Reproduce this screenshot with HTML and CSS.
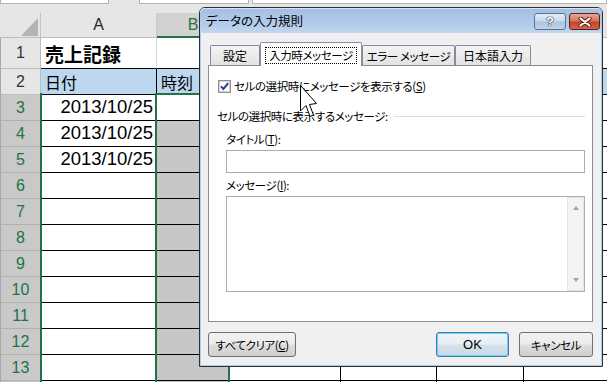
FILE: index.html
```html
<!DOCTYPE html>
<html lang="ja">
<head>
<meta charset="utf-8">
<title>データの入力規則</title>
<link rel="stylesheet" href="styles.css">
</head>
<body>
<div class="screen">
  <div class="topbar">
    <div class="tb-box tb-name"></div>
    <div class="tb-gap"></div>
    <div class="tb-box tb-mid"></div>
    <div class="tb-box tb-formula"></div>
  </div>
  <div class="sheet">
    <div class="corner"><span class="tri"></span></div>
    <div class="colh">A</div>
    <div class="colh sel">B</div>
    <div class="colh"></div>
    <div class="colh"></div>
    <div class="colh"></div>
    <div class="colh"></div>

    <div class="rowh">1</div>
    <div class="c r1 title">売上記録</div>
    <div class="c r1"></div>
    <div class="c r1"></div>
    <div class="c r1"></div>
    <div class="c r1"></div>
    <div class="c r1"></div>

    <div class="rowh">2</div>
    <div class="c hdr">日付</div>
    <div class="c hdr">時刻</div>
    <div class="c hdr"></div>
    <div class="c hdr"></div>
    <div class="c hdr"></div>
    <div class="c hdr"></div>

    <div class="rowh sel">3</div>
    <div class="c date">2013/10/25</div>
    <div class="c"></div>
    <div class="c"></div><div class="c"></div><div class="c"></div><div class="c"></div>

    <div class="rowh sel">4</div>
    <div class="c date">2013/10/25</div>
    <div class="c bsel"></div>
    <div class="c"></div><div class="c"></div><div class="c"></div><div class="c"></div>

    <div class="rowh sel">5</div>
    <div class="c date">2013/10/25</div>
    <div class="c bsel"></div>
    <div class="c"></div><div class="c"></div><div class="c"></div><div class="c"></div>

    <div class="rowh sel">6</div>
    <div class="c"></div><div class="c bsel"></div>
    <div class="c"></div><div class="c"></div><div class="c"></div><div class="c"></div>

    <div class="rowh sel">7</div>
    <div class="c"></div><div class="c bsel"></div>
    <div class="c"></div><div class="c"></div><div class="c"></div><div class="c"></div>

    <div class="rowh sel">8</div>
    <div class="c"></div><div class="c bsel"></div>
    <div class="c"></div><div class="c"></div><div class="c"></div><div class="c"></div>

    <div class="rowh sel">9</div>
    <div class="c"></div><div class="c bsel"></div>
    <div class="c"></div><div class="c"></div><div class="c"></div><div class="c"></div>

    <div class="rowh sel">10</div>
    <div class="c"></div><div class="c bsel"></div>
    <div class="c"></div><div class="c"></div><div class="c"></div><div class="c"></div>

    <div class="rowh sel">11</div>
    <div class="c"></div><div class="c bsel"></div>
    <div class="c"></div><div class="c"></div><div class="c"></div><div class="c"></div>

    <div class="rowh sel">12</div>
    <div class="c"></div><div class="c bsel"></div>
    <div class="c"></div><div class="c"></div><div class="c"></div><div class="c"></div>

    <div class="rowh sel">13</div>
    <div class="c"></div><div class="c bsel"></div>
    <div class="c"></div><div class="c"></div><div class="c"></div><div class="c"></div>

    <div class="rowh sel"></div>
    <div class="c"></div><div class="c bsel"></div>
    <div class="c"></div><div class="c"></div><div class="c"></div><div class="c"></div>
  </div>

  <div class="selline sel-a"></div>
  <div class="selline sel-ab"></div>
  <div class="selline sel-b"></div>
  <div class="seltop"></div>

  <div class="dialog">
    <div class="titlebar">
      <span class="dtitle">データの入力規則</span>
      <div class="tbtns">
        <div class="tbtn help">?</div>
        <div class="tbtn close">
          <svg width="14" height="10" viewBox="0 0 14 10">
            <path d="M2.5 1.5 L11.5 8.5 M11.5 1.5 L2.5 8.5" stroke="#5a1a10" stroke-width="4" stroke-linecap="round"/>
            <path d="M2.5 1.5 L11.5 8.5 M11.5 1.5 L2.5 8.5" stroke="#ffffff" stroke-width="2.2" stroke-linecap="round"/>
          </svg>
        </div>
      </div>
    </div>
    <div class="dbody">
      <div class="tabs">
        <div class="tab t1">設定</div>
        <div class="tab t2 active"><span class="focus">入力時メッセージ</span></div>
        <div class="tab t3">エラー メッセージ</div>
        <div class="tab t4">日本語入力</div>
      </div>
      <div class="panel">
        <div class="chkrow">
          <svg class="chk" width="13" height="13" viewBox="0 0 13 13">
            <rect x="0.5" y="0.5" width="12" height="12" fill="#f4f4f4" stroke="#8e8f8f"/>
            <rect x="1.5" y="1.5" width="10" height="10" fill="#ffffff" stroke="#d2d2d2"/>
            <path d="M3 6.3 L5.4 9 L10.2 3.2" fill="none" stroke="#22418f" stroke-width="2"/>
          </svg>
          <span>セルの選択時にメッセージを表示する(<u>S</u>)</span>
        </div>
        <div class="group"><span>セルの選択時に表示するメッセージ:</span><i class="rule"></i></div>
        <div class="lbl">タイトル(<u>T</u>):</div>
        <div class="input"></div>
        <div class="lbl lbl2">メッセージ(<u>I</u>):</div>
        <div class="textarea">
          <div class="vscroll"><span class="arr up"></span><span class="arr dn"></span></div>
        </div>
      </div>
      <div class="btnrow">
        <button class="btn clear">すべてクリア(<u>C</u>)</button>
        <span class="spacer"></span>
        <button class="btn ok">OK</button>
        <button class="btn cancel">キャンセル</button>
      </div>
    </div>
  </div>

  <svg class="cursor" width="18" height="34" viewBox="0 0 18 34">
    <polygon points="0.5,0.5 0.5,26 6,20.5 10,31.5 13.5,30 9.5,19.5 16.5,18.5" fill="#ffffff" stroke="#000000" stroke-width="1"/>
  </svg>
</div>
</body>
</html>
```

FILE: styles.css
```css
* { box-sizing: border-box; }
html, body { margin: 0; padding: 0; }
body {
  width: 607px;
  height: 382px;
  overflow: hidden;
  background: #e6e6e6;
  font-family: "Liberation Sans", Arial, sans-serif;
}
.screen {
  position: relative;
  width: 607px;
  height: 382px;
  overflow: hidden;
  background: #e6e6e6;
}

/* top strip (name box / formula bar edges) */
.topbar { display: flex; height: 13px; }
.tb-box { height: 4px; background: #fff; border: 1px solid #b4b4b4; border-top: none; }
.tb-name { width: 109px; }
.tb-gap { width: 30px; }
.tb-mid { width: 110px; }
.tb-formula { flex: 1; margin-left: 3px; }

/* sheet grid */
.sheet {
  display: grid;
  grid-template-columns: 41px 116px 73px 111px 96px 87px 100px;
  grid-template-rows: 25px 31px repeat(13, 26px);
  width: 624px;
}
.corner {
  background: #e6e6e6;
  border-right: 1px solid #c4c4c4;
  border-bottom: 1px solid #bdbdbd;
  display: flex;
  justify-content: flex-end;
  align-items: flex-end;
  padding: 0 2px 1px 0;
}
.tri {
  width: 17px;
  height: 18px;
  background: #b4b4b4;
  clip-path: polygon(100% 0, 100% 100%, 0 100%);
}
.colh {
  display: flex;
  align-items: center;
  justify-content: center;
  background: #e6e6e6;
  border-right: 1px solid #c8c8c8;
  border-bottom: 1px solid #bdbdbd;
  font-size: 16px;
  color: #262626;
}
.colh.sel {
  background: #d2d2d2;
  color: #217346;
  border-bottom: 2px solid #217346;
}
.rowh {
  display: flex;
  align-items: center;
  justify-content: center;
  background: #e6e6e6;
  border-left: 1px solid #a8a8a8;
  border-right: 1px solid #bdbdbd;
  border-bottom: 1px solid #bdbdbd;
  font-size: 16px;
  color: #333;
}
.rowh.sel { background: #c9c9c9; color: #217346; border-bottom-color: #b0b0b0; }

.c {
  background: #fff;
  border-right: 1px solid #000;
  border-bottom: 1px solid #000;
  display: flex;
  align-items: center;
  overflow: hidden;
  white-space: nowrap;
}
.c.r1 { border-right-color: #d4d4d4; }
.c.title {
  font-family: "Noto Sans CJK JP", sans-serif;
  font-weight: 700;
  font-size: 19px;
  padding-left: 4px;
  color: #000;
}
.c.hdr {
  background: #bdd7ee;
  font-family: "Noto Sans CJK JP", sans-serif;
  font-size: 16px;
  padding-left: 4px;
  color: #000;
}
.c.date {
  justify-content: flex-end;
  padding-right: 3px;
  padding-bottom: 2px;
  font-size: 18.5px;
  color: #000;
}
.c.bsel { background: #c6c6c6; }

/* selection outline */
.selline { position: absolute; top: 93px; width: 2px; height: 300px; background: #217346; }
.sel-a { left: 40px; }
.sel-ab { left: 155px; }
.sel-b { left: 228px; }
.seltop { position: absolute; left: 155px; top: 93px; width: 75px; height: 2px; background: #217346; }

/* dialog window */
.dialog {
  position: absolute;
  left: 199px;
  top: 7px;
  width: 404px;
  height: 360px;
  border: 1px solid #2e2e2e;
  border-radius: 6px 6px 0 0;
  background: #f0f0f0;
  box-shadow: inset 0 0 0 1px #a9cdee;
  font-family: "Noto Sans CJK JP", sans-serif;
  font-size: 11.5px;
  letter-spacing: -0.4px;
  font-feature-settings: "palt";
  color: #000;
  display: flex;
  flex-direction: column;
}
.titlebar {
  height: 25px;
  flex: none;
  display: flex;
  align-items: flex-start;
  justify-content: space-between;
  padding: 0 2px 0 6px;
  border-radius: 5px 5px 0 0;
  background: linear-gradient(to bottom, #a3bee1 0%, #b3cbea 60%, #c1d6ef 100%);
  box-shadow: inset 0 1px 0 #d6e4f5;
}
.dtitle { margin-top: 5px; line-height: 16px; font-size: 12.5px; letter-spacing: 0; }
.tbtns { display: flex; gap: 3px; margin-top: 5px; }
.tbtn {
  height: 17px;
  border-radius: 3px;
  display: flex;
  align-items: center;
  justify-content: center;
}
.help {
  width: 32px;
  border: 1px solid #5d718f;
  background: linear-gradient(to bottom, #e6eef8 0%, #cbd9ec 45%, #aec3df 55%, #c3d5ec 100%);
  color: #fff;
  font-family: "Liberation Sans", Arial, sans-serif;
  font-weight: 700;
  font-size: 13px;
  letter-spacing: 0;
  text-shadow: 0 0 1px #1d2a3d, 0 0 1px #1d2a3d, 0 0 1px #1d2a3d;
}
.close {
  width: 31px;
  border: 1px solid #5e1f15;
  background: linear-gradient(to bottom, #e9a897 0%, #d9725e 45%, #c3432c 55%, #d2644b 100%);
}

.dbody { flex: 1; padding: 9px 8px 0 8px; }
.tabs { display: flex; align-items: flex-end; height: 23px; padding-left: 2px; }
.tab {
  height: 20px;
  border: 1px solid #898c95;
  border-bottom: none;
  border-radius: 2px 2px 0 0;
  background: linear-gradient(to bottom, #f4f4f4, #e2e2e2);
  display: flex;
  align-items: center;
  justify-content: center;
  white-space: nowrap;
}
.t1 { width: 50px; font-size: 12px; letter-spacing: 0; }
.t2 { width: 102px; }
.t3 { width: 93px; }
.t4 { width: 76px; font-size: 12px; letter-spacing: 0; }
.tab.active {
  height: 24px;
  margin-bottom: -1px;
  background: #fff;
  position: relative;
  z-index: 1;
  padding-top: 2px;
}
.focus { border: 1px dotted #000; padding: 0 3px; line-height: 15px; }

.panel {
  width: 385px;
  height: 257px;
  border: 1px solid #898c95;
  background: #fff;
  display: flex;
  flex-direction: column;
}
.chkrow { display: flex; align-items: center; gap: 3px; height: 13px; margin: 14px 0 0 9px; line-height: 13px; }
.chk { flex: none; }
.group { display: flex; align-items: center; height: 16px; margin: 15px 7px 0 8px; }
.rule { flex: 1; height: 1px; margin-left: 6px; background: #d7dee6; }
.lbl { height: 16px; line-height: 16px; margin: 7px 0 0 17px; }
.lbl2 { margin-top: 4px; }
.input { margin: 3px 0 0 17px; width: 359px; height: 23px; border: 1px solid #abadb3; background: #fff; }
.textarea {
  margin: 3px 0 0 17px;
  width: 359px;
  height: 96px;
  border: 1px solid #abadb3;
  background: #fff;
  display: flex;
  justify-content: flex-end;
}
.vscroll {
  width: 17px;
  height: 100%;
  background: #f3f3f3;
  border: 1px solid #e4e4e4;
  display: flex;
  flex-direction: column;
  justify-content: space-between;
  align-items: center;
  padding: 8px 0 8px;
}
.arr { width: 0; height: 0; border-left: 3.5px solid transparent; border-right: 3.5px solid transparent; }
.arr.up { border-bottom: 4px solid #a4a4a4; }
.arr.dn { border-top: 4px solid #a4a4a4; }

.btnrow { display: flex; width: 385px; margin-top: 10px; gap: 10px; }
.spacer { flex: 1; }
.btn {
  height: 25px;
  padding: 0;
  margin: 0;
  border: 1px solid #707070;
  border-radius: 3px;
  background: linear-gradient(to bottom, #f2f2f2 0%, #ebebeb 48%, #dddddd 52%, #cfcfcf 100%);
  font-family: "Noto Sans CJK JP", sans-serif;
  font-size: 11.5px;
  letter-spacing: -0.4px;
  font-feature-settings: "palt";
  color: #000;
  display: flex;
  align-items: center;
  justify-content: center;
}
.clear { width: 88px; }
.ok {
  width: 73px;
  border-color: #3c7fb1;
  box-shadow: inset 0 0 0 1px #6fd0f7;
  background: linear-gradient(to bottom, #f0f5f9 0%, #e6eef4 48%, #d6e2eb 52%, #cbd9e3 100%);
  font-family: "Liberation Sans", Arial, sans-serif;
  font-size: 13px;
  letter-spacing: 0;
}
.cancel { width: 74px; }

.cursor { position: absolute; left: 300px; top: 85px; }
```
